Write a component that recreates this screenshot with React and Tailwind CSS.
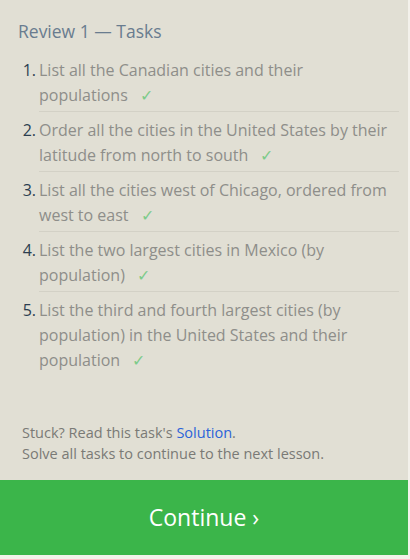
import React from "react";

const tasks = [
  "List all the Canadian cities and their populations",
  "Order all the cities in the United States by their latitude from north to south",
  "List all the cities west of Chicago, ordered from west to east",
  "List the two largest cities in Mexico (by population)",
  "List the third and fourth largest cities (by population) in the United States and their population",
];

const App = () => {
  return (
    <div
      className="w-[410px] h-[559px] bg-[#f3f1eb] overflow-hidden"
      style={{ fontFamily: '"Open Sans", "Noto Sans", sans-serif' }}
    >
      <div className="w-[408px] h-[555px] bg-[#e1dfd4] flex flex-col">
        {/* Header */}
        <h2 className="pl-[18px] pt-[18px] text-[17.5px] leading-[26px] text-[#697c8f]">
          Review 1 — Tasks
        </h2>

        {/* Task list */}
        <ol className="mt-[14px] pr-[9px]">
          {tasks.map((task, i) => (
            <li key={i} className="flex">
              <span className="w-[39px] shrink-0 text-right pr-[3px] text-[16px] leading-[25px] text-[#2c3e50]">
                {i + 1}.
              </span>
              <div
                className={`flex-1 text-[16px] leading-[25px] text-[#8e8e8a] pb-[3px] ${
                  i < tasks.length - 1 ? "border-b border-[#d3d1c6] mb-[6px]" : ""
                }`}
              >
                {task}
                <span className="ml-[12px] text-[#7dcb8a]">✓</span>
              </div>
            </li>
          ))}
        </ol>

        {/* Spacer */}
        <div className="flex-grow"></div>

        {/* Footer */}
        <div className="pl-[22px] pb-[16px] text-[14.5px] leading-[21px] text-[#7a7a76]">
          <p>
            Stuck? Read this task's{" "}
            <span className="text-[#2b63d9]">Solution</span>.
          </p>
          <p>Solve all tasks to continue to the next lesson.</p>
        </div>

        <button className="h-[75px] w-full bg-[#3bb54a] text-white text-[23px] flex items-center justify-center">
          Continue ›
        </button>
      </div>
    </div>
  );
};

export default App;
